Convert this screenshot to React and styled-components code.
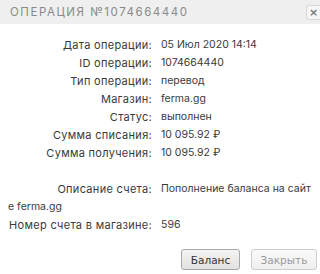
import React from "react";
import styled, { createGlobalStyle } from "styled-components";

const Global = createGlobalStyle`
  html, body { margin: 0; padding: 0; background: #fff; }
  #root { width: 320px; height: 274px; }
`;

const Dialog = styled.div`
  width: 320px;
  height: 274px;
  background: #fff;
  display: flex;
  flex-direction: column;
  overflow: hidden;
  font-family: Inter, "DejaVu Sans", sans-serif;
`;

const TitleBar = styled.div`
  height: 24px;
  background: #efefef;
  display: flex;
  align-items: center;
  justify-content: space-between;
  padding-left: 10px;
  flex: none;
`;

const Title = styled.div`
  font-size: 11.5px;
  letter-spacing: 1.55px;
  color: #8a8a8a;
  text-transform: uppercase;
`;

const CloseBtn = styled.div`
  width: 13px;
  height: 13px;
  border: 1px solid #d8d8d8;
  border-right: none;
  border-radius: 3px 0 0 3px;
  background: #f6f6f6;
  display: flex;
  align-items: center;
  justify-content: center;
  color: #777;
  font-size: 11px;
  font-weight: bold;
  font-family: "DejaVu Sans", sans-serif;
  line-height: 1;
`;

const Content = styled.div`
  padding: 12px 8px 0 8px;
  color: #3a3a3a;
  flex: 1;
`;

const Row = styled.div`
  font-size: 10.5px;
  line-height: 18px;
  min-height: ${(p) => (p.$gap ? "18px" : "auto")};
  word-break: break-all;
`;

const Label = styled.span`
  display: inline-block;
  vertical-align: top;
  width: 144px;
  height: 18px;
  text-align: right;
  margin-right: 9px;
  font-size: 11px;
  letter-spacing: 0.3px;
`;

const Value = styled.span``;

const Footer = styled.div`
  box-sizing: border-box;
  width: 100%;
  display: flex;
  justify-content: flex-end;
  gap: 11px;
  padding: 0 3px 4px 0;
`;

const Button = styled.div`
  box-sizing: border-box;
  flex: none;
  width: ${(p) => p.$w}px;
  height: 21px;
  border: 1px solid ${(p) => (p.$disabled ? "#cfcfcf" : "#a8a8a8")};
  border-radius: 3px;
  background: ${(p) =>
    p.$disabled
      ? "linear-gradient(#fafafa, #efefef)"
      : "linear-gradient(#f4f4f4, #e2e2e2)"};
  color: ${(p) => (p.$disabled ? "#9a9a9a" : "#333")};
  font-family: "DejaVu Sans", Verdana, sans-serif;
  font-size: 10.5px;
  display: flex;
  align-items: center;
  justify-content: center;
`;

const rows = [
  ["Дата операции:", "05 Июл 2020 14:14"],
  ["ID операции:", "1074664440"],
  ["Тип операции:", "перевод"],
  ["Магазин:", "ferma.gg"],
  ["Статус:", "выполнен"],
  ["Сумма списания:", "10 095.92 ₽"],
  ["Сумма получения:", "10 095.92 ₽"],
];

export default function App() {
  return (
    <Dialog>
      <Global />
      <TitleBar>
        <Title>Операция №1074664440</Title>
        <CloseBtn>×</CloseBtn>
      </TitleBar>
      <Content>
        {rows.map(([l, v]) => (
          <Row key={l}>
            <Label>{l}</Label>
            <Value>{v}</Value>
          </Row>
        ))}
        <Row $gap />
        <Row>
          <Label>Описание счета:</Label>
          <Value>Пополнение баланса на сайте ferma.gg</Value>
        </Row>
        <Row>
          <Label>Номер счета в магазине:</Label>
          <Value>596</Value>
        </Row>
      </Content>
      <Footer>
        <Button $w={59}>Баланс</Button>
        <Button $w={66} $disabled>
          Закрыть
        </Button>
      </Footer>
    </Dialog>
  );
}
